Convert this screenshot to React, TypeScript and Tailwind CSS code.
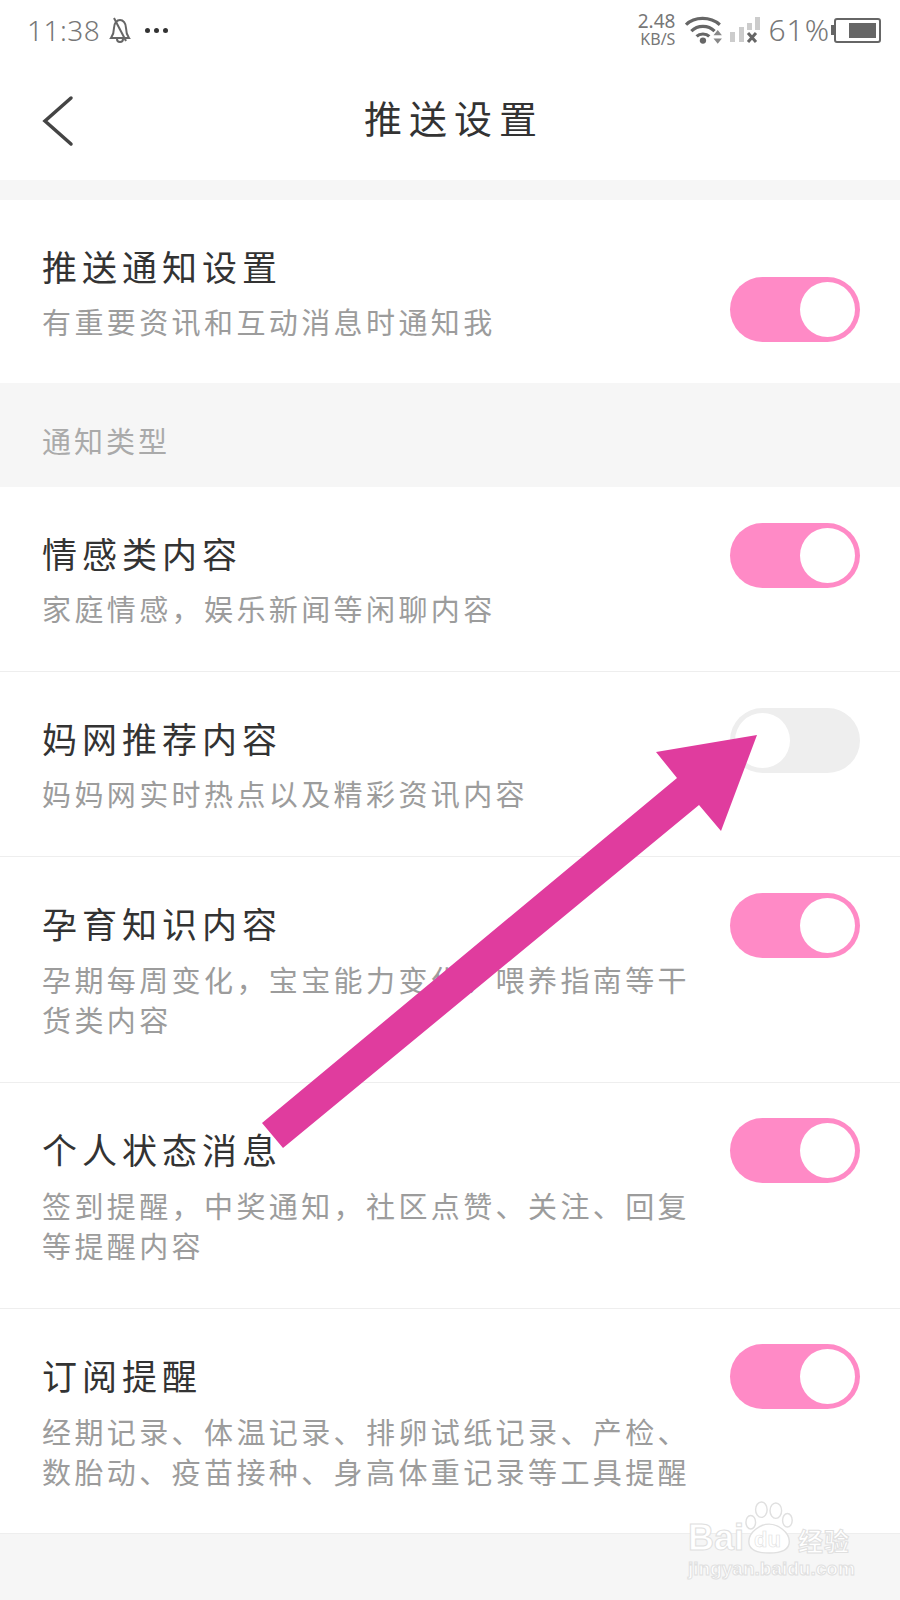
import React from 'react';

const cjk = { fontFamily: '"Noto Sans CJK SC", sans-serif' };

const Toggle = ({ on, className }: { on: boolean; className: string }) => (
    <div className={`flex h-[65px] w-[130px] shrink-0 items-center rounded-full px-[5px] ${on ? 'justify-end bg-[#ff8ac6]' : 'justify-start bg-[#eeeeee]'} ${className}`}>
        <div className="h-[55px] w-[55px] rounded-full bg-white" />
    </div>
);

const Row = ({ title, lines, on = true, height, divider = true, toggleTop = 'mt-[36px]' }: {
    title: string; lines: string[]; on?: boolean; height: string; divider?: boolean; toggleTop?: string;
}) => (
    <div className={`flex justify-between bg-white pl-[42px] pr-[40px] ${height} ${divider ? 'border-b border-[#eeeeee]' : ''}`}>
        <div className="pt-[44px]">
            <div className="text-[35px] leading-[44px] tracking-[5px] text-[#333333]">{title}</div>
            <div className={`text-[29px] leading-[40px] tracking-[3.4px] text-[#9c9c9c] ${lines.length > 1 ? 'mt-[14px]' : 'mt-[13px]'}`}>
                {lines.map((line) => (
                    <div key={line} className="whitespace-nowrap">{line}</div>
                ))}
            </div>
        </div>
        <Toggle on={on} className={toggleTop} />
    </div>
);

const StatusBar = () => (
    <div className="flex h-[60px] items-center justify-between pl-[27px] pr-[19px] text-[#777777]" style={{ fontFamily: '"Noto Sans", sans-serif' }}>
        <div className="flex items-center">
            <span className="text-[28px] font-light leading-none tracking-[0.5px]">11:38</span>
            <svg width="22" height="26" viewBox="0 0 22 26" className="ml-[9px]" fill="none" stroke="#666666" strokeWidth="2">
                <path d="M2 21c2-3 3-5 3-10 0-5 3-8 6-8s6 3 6 8c0 5 1 7 3 10z" />
                <path d="M8 22c0 2 1.500 3 3 3s3-1 3-3" />
                <path d="M5 1l12 23" />
            </svg>
            <div className="ml-[14px] flex gap-[4px]">
                <div className="h-[5px] w-[5px] rounded-full bg-[#333333]" />
                <div className="h-[5px] w-[5px] rounded-full bg-[#333333]" />
                <div className="h-[5px] w-[5px] rounded-full bg-[#333333]" />
            </div>
        </div>
        <div className="flex items-center">
            <div className="flex flex-col items-end gap-[2px]">
                <span className="text-[19px] leading-[17px]">2.48</span>
                <span className="text-[16px] leading-[15px]">KB/S</span>
            </div>
            <svg width="38" height="30" viewBox="0 0 36 28" className="ml-[10px]" fill="none">
                <path d="M1 9C9 1 24 1 33 9" stroke="#666666" strokeWidth="3" />
                <path d="M6 15C12 9 22 9 28 15" stroke="#666666" strokeWidth="3" />
                <path d="M11 20c3-3 9-3 12 0" stroke="#666666" strokeWidth="3" />
                <circle cx="17" cy="24" r="3" fill="#666666" />
                <path d="M31 14l4 5h-8zM31 27l-4-5h8z" fill="#888888" />
            </svg>
            <svg width="30" height="26" viewBox="0 0 30 26" className="ml-[7px]">
                <rect x="0" y="15" width="5" height="10" fill="#cccccc" />
                <rect x="9" y="10" width="5" height="15" fill="#cccccc" />
                <rect x="17" y="6" width="5" height="7" fill="#cccccc" />
                <rect x="25" y="0" width="5" height="13" fill="#cccccc" />
                <path d="M18 16l8 9M26 16l-8 9" stroke="#666666" strokeWidth="3" />
            </svg>
            <span className="ml-[8px] text-[30px] font-light leading-none tracking-[1px]">61%</span>
            <div className="ml-[1px] flex items-center">
                <div className="h-[10px] w-[3px] bg-[#666666]" />
                <div className="flex h-[25px] w-[47px] justify-end rounded-[3px] border-2 border-[#666666] p-[3px]">
                    <div className="h-full w-[27px] bg-[#666666]" />
                </div>
            </div>
        </div>
    </div>
);

const Watermark = () => (
    <div className="absolute left-[688px] top-[1500px] w-[170px] text-white" style={{ fontFamily: '"Liberation Sans", sans-serif' }}>
        <div className="flex items-end">
            <span className="text-[36px] font-bold leading-[36px] [-webkit-text-stroke:1px_#e0e0e0]">Bai</span>
            <div className="relative h-[56px] w-[54px] shrink-0">
                <svg width="54" height="56" viewBox="0 0 56 56" fill="#ffffff" stroke="#e0e0e0" strokeWidth="1.500">
                    <ellipse cx="18" cy="9" rx="6" ry="8" />
                    <ellipse cx="33" cy="10" rx="6" ry="8" />
                    <ellipse cx="45" cy="20" rx="5" ry="7" />
                    <ellipse cx="7" cy="22" rx="5" ry="7" />
                    <path d="M5 42c0-10 12-18 21-18s21 8 21 18c0 8-6 12-21 12S5 50 5 42z" />
                </svg>
                <div className="absolute left-[10px] top-[29px] text-[22px] font-bold leading-none [-webkit-text-stroke:0.6px_#e0e0e0]">du</div>
            </div>
            <span className="text-[25px] font-bold leading-[32px] tracking-[1px] [-webkit-text-stroke:1px_#e0e0e0]" style={cjk}>经验</span>
        </div>
        <div className="mt-[1px] whitespace-nowrap text-[19px] font-bold leading-[24px] [-webkit-text-stroke:1px_#e0e0e0]">jingyan.baidu.com</div>
    </div>
);

const App = () => {
    return (
        <div className="relative h-[1600px] w-[900px] overflow-hidden bg-[#f6f6f6]" style={cjk}>
            <div className="h-[180px] bg-white">
                <StatusBar />
                <div className="relative flex h-[120px] items-center justify-center pb-[6px] pl-[8px]">
                    <svg width="34" height="52" viewBox="0 0 34 52" fill="none" stroke="#444444" strokeWidth="3.500" strokeLinecap="round" className="absolute left-[42px] top-[35px]">
                        <path d="M29 3L3 26l26 23" />
                    </svg>
                    <span className="text-[38px] leading-none tracking-[7px] text-[#333333]">推送设置</span>
                </div>
            </div>
            <div className="mt-[20px]">
                <Row title="推送通知设置" lines={['有重要资讯和互动消息时通知我']} height="h-[183px]" divider={false} toggleTop="mt-[77px]" />
            </div>
            <div className="flex h-[104px] items-center pl-[42px] pt-[10px] text-[29px] leading-none tracking-[3px] text-[#aaaaaa]">通知类型</div>
            <Row title="情感类内容" lines={['家庭情感，娱乐新闻等闲聊内容']} height="h-[185px]" />
            <Row title="妈网推荐内容" lines={['妈妈网实时热点以及精彩资讯内容']} on={false} height="h-[185px]" />
            <Row title="孕育知识内容" lines={['孕期每周变化，宝宝能力变化、喂养指南等干', '货类内容']} height="h-[226px]" />
            <Row title="个人状态消息" lines={['签到提醒，中奖通知，社区点赞、关注、回复', '等提醒内容']} height="h-[226px]" toggleTop="mt-[35px]" />
            <Row title="订阅提醒" lines={['经期记录、体温记录、排卵试纸记录、产检、', '数胎动、疫苗接种、身高体重记录等工具提醒']} height="h-[225px]" toggleTop="mt-[35px]" />

            <svg width="900" height="1600" viewBox="0 0 900 1600" className="absolute left-0 top-0">
                <polygon points="757,735 656,752 677,778 262,1123 283,1148 699,805 721,831" fill="#e03c9e" />
            </svg>
            <Watermark />
        </div>
    );
};

export default App;
